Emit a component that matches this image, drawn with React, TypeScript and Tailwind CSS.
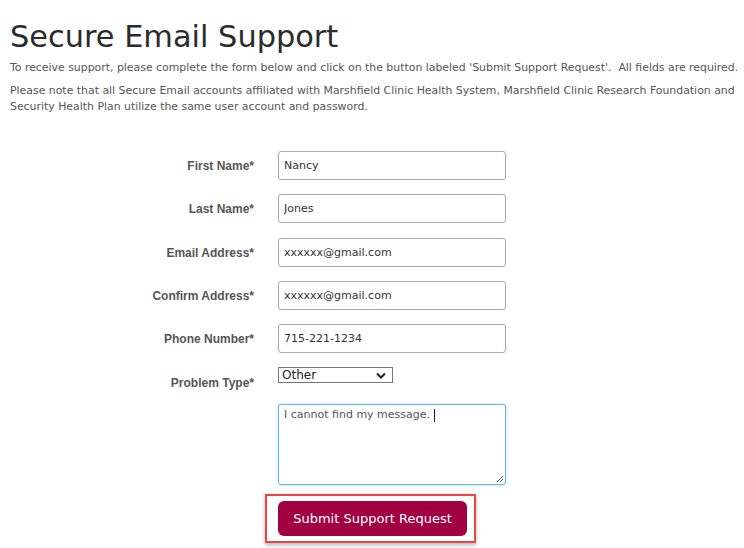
import React from "react";

const labelCls =
  "w-[254px] text-right text-[12px] font-bold text-[#555]";
const labelFont = { fontFamily: '"Liberation Sans", Arial, sans-serif' };
const inputCls =
  "ml-[24px] w-[228px] h-[29px] rounded-[3px] border border-[#a9a9a9] bg-white px-[5px] text-[11px] text-[#333] outline-none";

function Row({ label, value, mt }: { label: string; value: string; mt: string }) {
  return (
    <div className={`flex items-center ${mt}`}>
      <div className={labelCls} style={labelFont}>{label}</div>
      <input className={inputCls} defaultValue={value} style={{ fontFamily: "inherit" }} />
    </div>
  );
}

export default function App() {
  return (
    <div
      className="w-[744px] h-[548px] bg-white overflow-hidden text-[#333]"
      style={{ fontFamily: '"DejaVu Sans", "Liberation Sans", sans-serif' }}
    >
      <div className="px-[10px] pt-[18px]">
        <h1 className="text-[30.4px] leading-[38px] text-[#2b2b2b]">Secure Email Support</h1>
        <p className="mt-[5px] text-[10.9px] leading-[14px] text-[#555] whitespace-nowrap">
          To receive support, please complete the form below and click on the button labeled 'Submit Support Request'.&nbsp; All fields are required.
        </p>
        <p className="mt-[8px] text-[10.9px] leading-[16px] text-[#555] whitespace-nowrap">
          Please note that all Secure Email accounts affiliated with Marshfield Clinic Health System, Marshfield Clinic Research Foundation and
          <br />
          Security Health Plan utilize the same user account and password.
        </p>
      </div>
      <div className="mt-[36px]">
        <Row label="First Name*" value="Nancy" mt="mt-0" />
        <Row label="Last Name*" value="Jones" mt="mt-[14px]" />
        <Row label="Email Address*" value="xxxxxx@gmail.com" mt="mt-[15px]" />
        <Row label="Confirm Address*" value="xxxxxx@gmail.com" mt="mt-[14px]" />
        <Row label="Phone Number*" value="715-221-1234" mt="mt-[14px]" />
        <div className="flex items-start mt-[14px]">
          <div className={`${labelCls} pt-[7px]`} style={labelFont}>Problem Type*</div>
          <div className="ml-[24px] w-[115px] h-[16px] border border-[#767676] bg-white flex items-center justify-between pl-[3px] pr-[6px] text-[12px] text-[#222]">
            <span>Other</span>
            <svg width="10" height="7" viewBox="0 0 10 7">
              <path d="M1 1.5 L5 5.5 L9 1.5" stroke="#222" strokeWidth="2" fill="none" />
            </svg>
          </div>
        </div>
        <div className="flex mt-[12px]">
          <div className="w-[254px]" />
          <div className="ml-[24px] relative w-[228px] h-[81px] rounded-[3px] border border-[#6cb4f0] shadow-[0_0_3px_#9fd0fa] bg-white px-[5px] pt-[2px] text-[11px] text-[#555]">
            I cannot find my message. <span className="inline-block w-px h-[13px] bg-[#222] align-middle" />
            <svg className="absolute right-[1px] bottom-[1px]" width="9" height="9" viewBox="0 0 9 9">
              <path d="M8 2 L2 8 M8 5 L5 8" stroke="#666" strokeWidth="1" />
            </svg>
          </div>
        </div>
        <div className="flex mt-[9px]">
          <div className="w-[265px]" />
          <div className="w-[211px] h-[49px] border-[2px] border-[#ef4444] shadow-[0_2px_4px_rgba(0,0,0,0.3)] flex items-center pl-[11px]">
            <div className="w-[189px] h-[35px] rounded-[6px] bg-[#a10042] text-white text-[13px] flex items-center justify-center">
              Submit Support Request
            </div>
          </div>
        </div>
      </div>
    </div>
  );
}
